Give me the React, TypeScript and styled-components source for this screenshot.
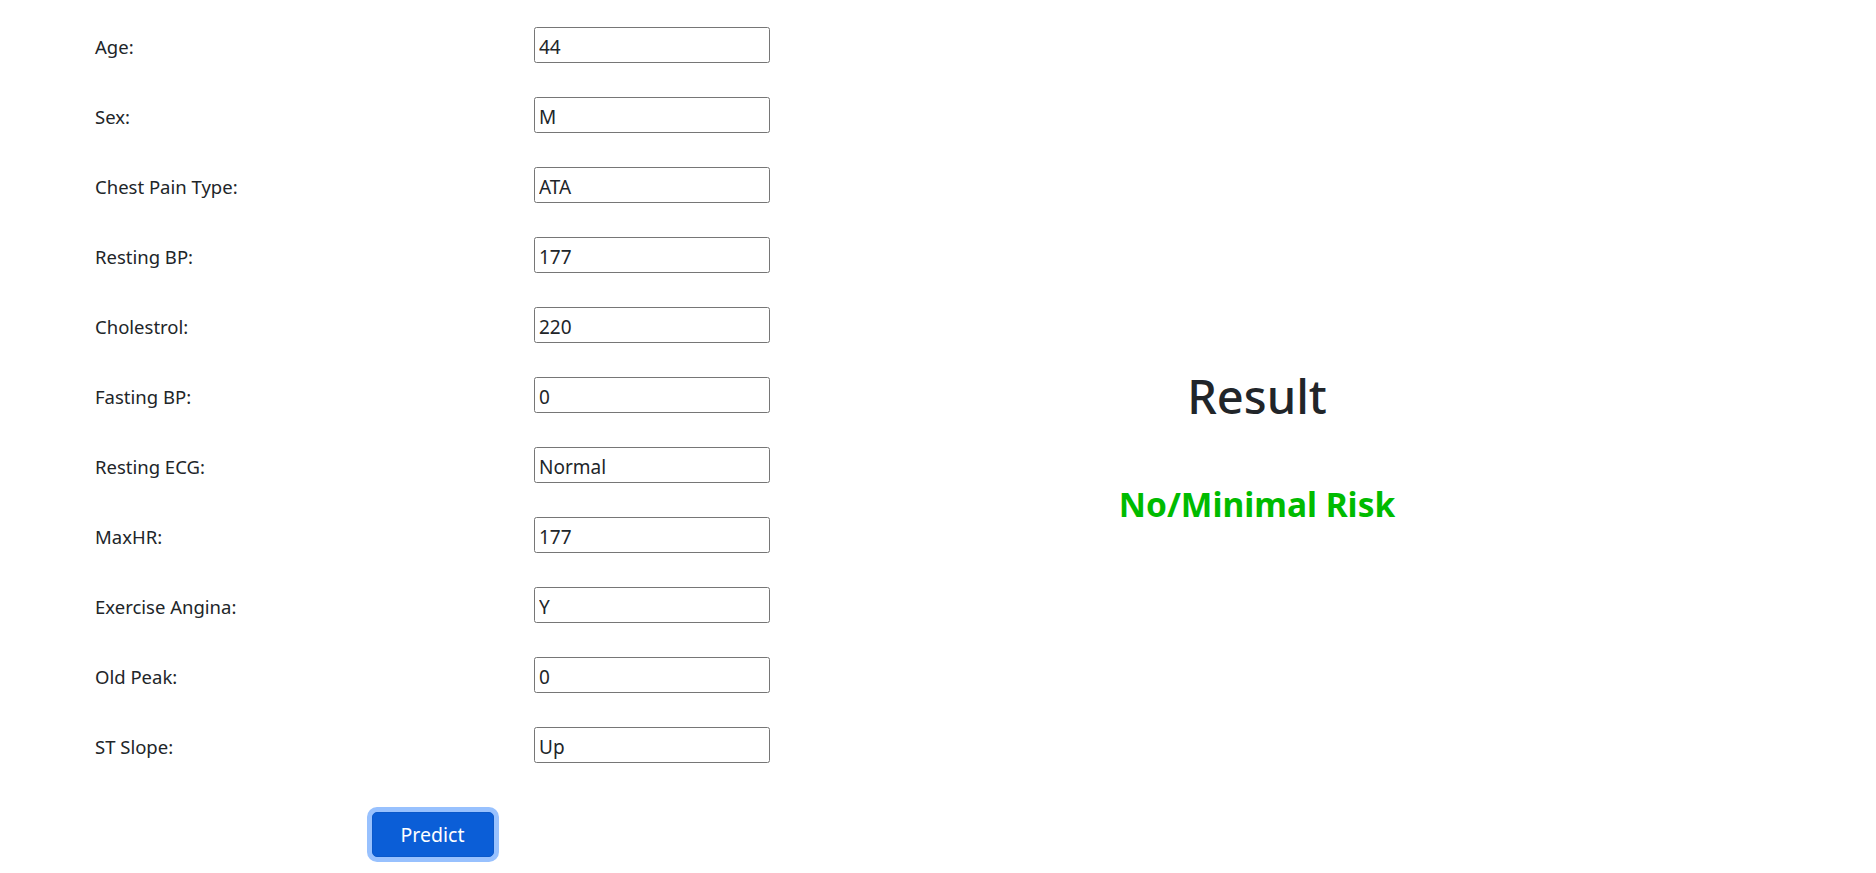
import React from "react";
import styled, { createGlobalStyle } from "styled-components";

const GlobalStyle = createGlobalStyle`
  html, body {
    margin: 0;
    padding: 0;
    background: #ffffff;
  }
  body {
    font-family: "Noto Sans", "Open Sans", sans-serif;
    font-size: 18.5px;
    line-height: 1.5;
    color: #212529;
  }
  * { box-sizing: border-box; }
`;

const Page = styled.div`
  display: grid;
  grid-template-columns: 675px 1fr;
  padding: 27px 132px 0 95px;
  min-height: 873px;
`;

const Form = styled.form`
  display: flex;
  flex-direction: column;
`;

const Row = styled.div`
  display: grid;
  grid-template-columns: 439px 236px;
  align-items: center;
  height: 36px;
  margin-bottom: 34px;
`;

const Label = styled.label`
  font-size: 18.5px;
  padding-top: 3px;
`;

const Input = styled.input`
  width: 236px;
  height: 36px;
  border: 1.25px solid #767676;
  border-radius: 2.5px;
  padding: 3px 4px 0;
  font-family: inherit;
  font-size: 19px;
  color: #212529;
  background: #fff;
  outline: none;
`;

const ButtonRow = styled.div`
  display: flex;
  justify-content: center;
  margin-top: 15px;
`;

const PredictButton = styled.button`
  width: 122px;
  height: 45px;
  background: #0b5ed7;
  color: #fff;
  border: 1.25px solid #0a58ca;
  border-radius: 5px;
  font-family: inherit;
  font-size: 19.5px;
  box-shadow: 0 0 0 5px #98c1fe;
  cursor: pointer;
`;

const ResultPanel = styled.div`
  display: flex;
  flex-direction: column;
  align-items: center;
  justify-content: center;
  padding-bottom: 8px;
`;

const ResultTitle = styled.h1`
  margin: 0 0 60px;
  font-size: 47px;
  font-weight: 500;
  line-height: 1.2;
  color: #212529;
`;

const RiskText = styled.h3`
  margin: 0;
  font-size: 33.5px;
  font-weight: 700;
  line-height: 1.2;
  color: #00bb00;
`;

const fields: [string, string][] = [
  ["Age:", "44"],
  ["Sex:", "M"],
  ["Chest Pain Type:", "ATA"],
  ["Resting BP:", "177"],
  ["Cholestrol:", "220"],
  ["Fasting BP:", "0"],
  ["Resting ECG:", "Normal"],
  ["MaxHR:", "177"],
  ["Exercise Angina:", "Y"],
  ["Old Peak:", "0"],
  ["ST Slope:", "Up"],
];

export default function App() {
  return (
    <>
      <GlobalStyle />
      <Page>
        <Form onSubmit={(e) => e.preventDefault()}>
          {fields.map(([label, value]) => (
            <Row key={label}>
              <Label>{label}</Label>
              <Input type="text" defaultValue={value} />
            </Row>
          ))}
          <ButtonRow>
            <PredictButton type="submit">Predict</PredictButton>
          </ButtonRow>
        </Form>
        <ResultPanel>
          <ResultTitle>Result</ResultTitle>
          <RiskText>No/Minimal Risk</RiskText>
        </ResultPanel>
      </Page>
    </>
  );
}
